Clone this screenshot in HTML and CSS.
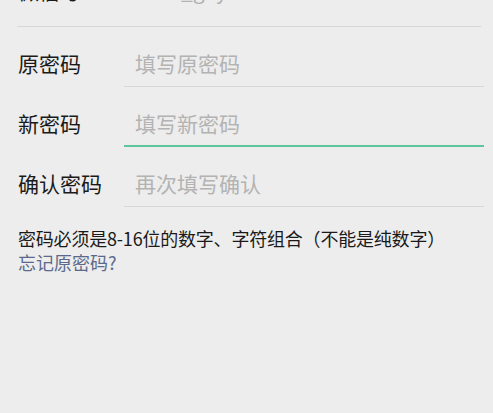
FILE: index.html
```html
<!DOCTYPE html>
<html lang="zh-CN">

<head>
    <meta charset="UTF-8">
    <meta name="viewport" content="width=device-width, initial-scale=1.0">
    <title>修改密码</title>
    <link rel="stylesheet" href="styles.css">
</head>

<body>
    <div class="page">
        <!-- 위에서 잘린 행 -->
        <div class="top-row">
            <span class="top-label">微信号</span>
            <span class="top-value">wxid_g9y2k8</span>
        </div>

        <form class="pw-form">
            <div class="row">
                <label class="label" for="old">原密码</label>
                <input class="field" id="old" type="password" placeholder="填写原密码">
            </div>
            <div class="row">
                <label class="label" for="new">新密码</label>
                <input class="field on" id="new" type="password" placeholder="填写新密码">
            </div>
            <div class="row">
                <label class="label" for="again">确认密码</label>
                <input class="field" id="again" type="password" placeholder="再次填写确认">
            </div>
        </form>

        <p class="hint">密码必须是8-16位的数字、字符组合（不能是纯数字）</p>
        <a class="forgot" href="#">忘记原密码?</a>
    </div>
</body>

</html>
```

FILE: styles.css
```css
* {
    box-sizing: border-box;
}

html,
body {
    margin: 0;
    padding: 0;
    background: #ededed;
}

body {
    font-family: "Noto Sans CJK SC", "Noto Sans", sans-serif;
    color: #1a1a1a;
    overflow: hidden;
}

.page {
    display: flex;
    flex-direction: column;
    align-items: flex-start;
}

/* 잘린 맨 윗줄 */
.top-row {
    display: flex;
    align-self: stretch;
    height: 67px;
    margin: -40px 12px 0 17px;
    padding-top: 19px;
    border-bottom: 1px solid #d8d8d8;
    font-size: 21px;
    line-height: 22px;
}

.top-label {
    width: 107px;
    padding-left: 1px;
}

.top-value {
    padding-left: 11px;
    color: #b3b3b3;
}

/* 입력 폼 */
.pw-form {
    align-self: stretch;
    display: flex;
    flex-direction: column;
}

.row {
    display: flex;
    height: 60px;
    padding-left: 18px;
    padding-right: 9px;
}

.label {
    width: 106px;
    padding-top: 25px;
    font-size: 21px;
    line-height: 22px;
    color: #1a1a1a;
}

.field {
    flex: 1;
    height: 60px;
    margin: 0;
    padding: 25px 0 12px 11px;
    border: none;
    border-bottom: 1px solid #d8d8d8;
    background: transparent;
    font-family: inherit;
    font-size: 21px;
    line-height: 22px;
    color: #1a1a1a;
    outline: none;
}

.field::placeholder {
    color: #b3b3b3;
}

/* 포커스된 입력칸 */
.field.on {
    border-bottom: 2px solid #5ec69a;
}

.hint {
    margin: 19px 0 0 18px;
    font-size: 18px;
    line-height: 24px;
    letter-spacing: -0.2px;
    color: #1a1a1a;
}

.forgot {
    margin-left: 18px;
    font-size: 18px;
    line-height: 24px;
    color: #5b6a8c;
    text-decoration: none;
}
```
